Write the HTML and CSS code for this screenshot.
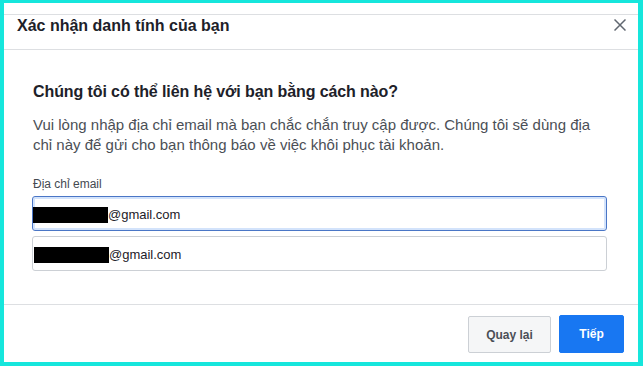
FILE: index.html
```html
<!DOCTYPE html>
<html lang="vi">
<head>
<meta charset="utf-8">
<title>Xác nhận danh tính của bạn</title>
<link rel="stylesheet" href="styles.css">
</head>
<body>
<div class="frame">
  <div class="header">
    <div class="title">Xác nhận danh tính của bạn</div>
    <svg class="close" width="12" height="12" viewBox="0 0 12 12" aria-label="Đóng">
      <path d="M0.5 0.5 L11.5 11.5 M11.5 0.5 L0.5 11.5" stroke="#606770" stroke-width="1.5" fill="none"/>
    </svg>
  </div>
  <div class="body">
    <h2 class="heading">Chúng tôi có thể liên hệ với bạn bằng cách nào?</h2>
    <p class="desc">Vui lòng nhập địa chỉ email mà bạn chắc chắn truy cập được. Chúng tôi sẽ dùng địa chỉ này để gửi cho bạn thông báo về việc khôi phục tài khoản.</p>
    <div class="label">Địa chỉ email</div>
    <div class="inputs">
      <div class="input focused"><span class="redact"></span><span class="val">@gmail.com</span></div>
      <div class="input"><span class="redact second"></span><span class="val">@gmail.com</span></div>
    </div>
  </div>
  <div class="footer">
    <button class="btn back">Quay lại</button>
    <button class="btn next">Tiếp</button>
  </div>
</div>
</body>
</html>
```

FILE: styles.css
```css
html, body {
  margin: 0;
  padding: 0;
  background: #16e6dc;
}
.frame {
  box-sizing: border-box;
  width: 643px;
  height: 366px;
  border-style: solid;
  border-color: #16e6dc;
  border-width: 3px 5px 4px 4px;
  background: #ffffff;
  padding-top: 11px;
  display: flex;
  flex-direction: column;
  font-family: "Liberation Sans", Arial, Helvetica, sans-serif;
  color: #1d2129;
}
.header {
  box-sizing: border-box;
  height: 36px;
  border-top: 1px solid #dddfe2;
  border-bottom: 1px solid #dddfe2;
  display: flex;
  justify-content: space-between;
  align-items: flex-start;
  padding-left: 13px;
  padding-right: 12px;
}
.title {
  font-size: 16px;
  font-weight: bold;
  line-height: 20px;
  padding-top: 1px;
  color: #1d2129;
}
.close {
  margin-top: 4px;
  display: block;
}
.body {
  padding: 32px 31px 0 29px;
}
.heading {
  margin: 0;
  font-size: 16px;
  font-weight: bold;
  line-height: 20px;
  letter-spacing: -0.1px;
  color: #1d2129;
}
.desc {
  margin: 13px 0 0 0;
  font-size: 15px;
  line-height: 20px;
  color: #4b4f56;
}
.label {
  margin-top: 21px;
  font-size: 12px;
  line-height: 16px;
  color: #444950;
}
.inputs {
  margin-top: 4px;
  margin-left: -1px;
  display: flex;
  flex-direction: column;
  gap: 5px;
}
.input {
  box-sizing: border-box;
  height: 35px;
  border: 1px solid #ccd0d5;
  border-radius: 3px;
  display: flex;
  align-items: center;
  padding-top: 2px;
  font-size: 13px;
  color: #1d2129;
}
.input.focused {
  border-color: #4a76c6;
  box-shadow: inset 0 0 0 2px #d3e3fb;
}
.redact {
  display: inline-block;
  width: 75px;
  height: 16px;
  background: #000000;
}
.redact.second {
  margin-left: 1px;
}
.footer {
  margin-top: auto;
  box-sizing: border-box;
  height: 58px;
  border-top: 1px solid #dddfe2;
  display: flex;
  justify-content: flex-end;
  align-items: flex-start;
  gap: 8px;
  padding: 10px 14px 0 0;
}
.btn {
  font-family: "Liberation Sans", Arial, Helvetica, sans-serif;
  font-size: 12px;
  font-weight: bold;
  border-radius: 2px;
  padding: 0;
  cursor: pointer;
}
.back {
  width: 83px;
  height: 37px;
  margin-top: 1px;
  background: #f5f6f7;
  border: 1px solid #ccd0d5;
  color: #4b4f56;
}
.next {
  width: 65px;
  height: 38px;
  background: #1877f2;
  border: 1px solid #1877f2;
  color: #ffffff;
}
```
